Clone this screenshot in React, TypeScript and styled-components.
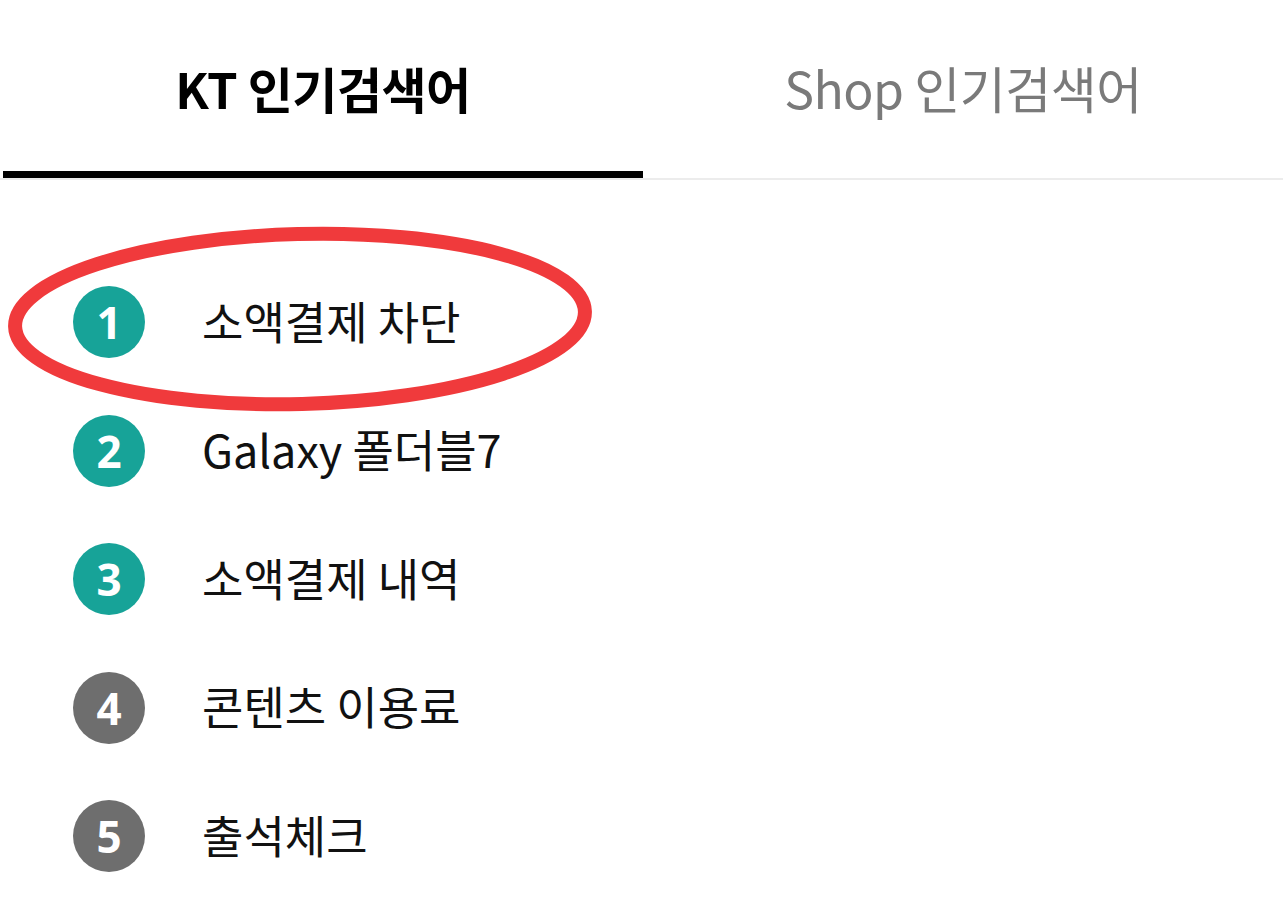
import React from "react";
import styled, { createGlobalStyle } from "styled-components";

const GlobalStyle = createGlobalStyle`
  html, body { margin: 0; padding: 0; background: #ffffff; }
  body { font-family: "Noto Sans CJK KR", "Noto Sans", sans-serif; }
  * { box-sizing: border-box; }
`;

const Page = styled.div`
  width: 1283px;
  min-height: 919px;
  background: #fff;
`;

const TabBar = styled.div`
  display: flex;
  border-bottom: 2px solid #ececec;
`;

const Tab = styled.div<{ $active?: boolean }>`
  flex: 1;
  height: 178px;
  display: flex;
  justify-content: center;
  align-items: flex-start;
  padding-top: ${(p) => (p.$active ? "63px" : "62px")};
  font-size: ${(p) => (p.$active ? "49px" : "50px")};
  line-height: 1;
  letter-spacing: -0.5px;
  font-weight: ${(p) => (p.$active ? 700 : 400)};
  color: ${(p) => (p.$active ? "#000" : "#7a7a7a")};
  border-bottom: ${(p) => (p.$active ? "7px solid #000" : "none")};
  margin-left: ${(p) => (p.$active ? "3px" : "0")};
`;

const List = styled.ol`
  list-style: none;
  margin: 0;
  padding: 78px 0 0 0;
`;

const Row = styled.li`
  position: relative;
  height: 128.5px;
  display: flex;
  align-items: center;
  padding-left: 73px;
`;

const Badge = styled.span<{ $top?: boolean }>`
  width: 72px;
  height: 72px;
  border-radius: 50%;
  flex: none;
  display: flex;
  align-items: center;
  justify-content: center;
  background: ${(p) => (p.$top ? "#17a398" : "#6e6e6e")};
  color: #fff;
  font-family: "Open Sans", "Noto Sans", sans-serif;
  font-weight: 700;
  font-size: 44px;
  line-height: 1;
`;

const Label = styled.span`
  margin-left: 57px;
  font-size: 45px;
  line-height: 1;
  color: #111;
  margin-top: -4px;
`;

const Highlight = styled.svg`
  position: absolute;
  left: 0;
  top: -40px;
  width: 600px;
  height: 200px;
  pointer-events: none;
`;

const items = ["소액결제 차단", "Galaxy 폴더블7", "소액결제 내역", "콘텐츠 이용료", "출석체크"];

export default function App() {
  return (
    <Page>
      <GlobalStyle />
      <TabBar>
        <Tab $active>KT 인기검색어</Tab>
        <Tab>Shop 인기검색어</Tab>
      </TabBar>
      <List>
        {items.map((t, i) => (
          <Row key={t}>
            {i === 0 && (
              <Highlight viewBox="0 0 600 200">
                <ellipse
                  cx="300"
                  cy="101"
                  rx="285"
                  ry="85"
                  fill="none"
                  stroke="#f03a3c"
                  strokeWidth="14"
                  transform="rotate(-1.5 300 101)"
                />
              </Highlight>
            )}
            <Badge $top={i < 3}>{i + 1}</Badge>
            <Label>{t}</Label>
          </Row>
        ))}
      </List>
    </Page>
  );
}
